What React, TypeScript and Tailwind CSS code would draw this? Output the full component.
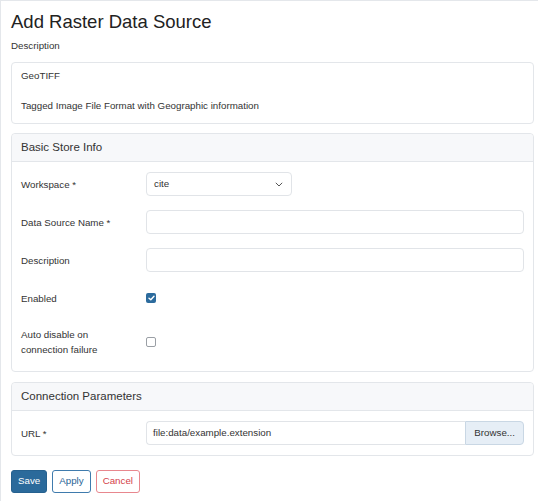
import React from "react";

function Panel({ title, className, children }: { title: string; className: string; children: React.ReactNode }) {
  return (
    <div className={`rounded-[4px] border border-[#e3e6ea] bg-white ${className}`}>
      <div className="flex h-[28px] items-center rounded-t-[4px] border-b border-[#e3e6ea] bg-[#f7f8fa] px-[9px] text-[11.5px] text-[#333]">
        {title}
      </div>
      {children}
    </div>
  );
}

function Row({ label, children, tall }: { label: React.ReactNode; children: React.ReactNode; tall?: boolean }) {
  return (
    <div className={`flex items-center ${tall ? "min-h-[36px]" : "h-[24px]"}`}>
      <div className="w-[125px] shrink-0 leading-[15px]">{label}</div>
      <div className="flex flex-1 items-center">{children}</div>
    </div>
  );
}

function TextInput() {
  return <div className="h-[24px] w-full rounded-[4px] border border-[#e1e4e8] bg-white" />;
}

function Checkbox({ checked }: { checked?: boolean }) {
  if (checked) {
    return (
      <div className="flex h-[10px] w-[10px] items-center justify-center rounded-[2px] bg-[#2c6b9d]">
        <svg width="7" height="6" viewBox="0 0 7 6" fill="none">
          <path d="M1 3.2 L2.8 4.8 L6 1.2" stroke="white" strokeWidth="1.4" strokeLinecap="round" strokeLinejoin="round" />
        </svg>
      </div>
    );
  }
  return <div className="h-[10px] w-[10px] rounded-[2px] border border-[#9a9fa5] bg-white" />;
}

export default function App() {
  return (
    <div className="min-h-[501px] border-l border-t border-[#e4e7eb] bg-white pl-[10px] pr-[4px] font-['Liberation_Sans',Arial,sans-serif] text-[9.75px] text-[#333]">
      <h1 className="pt-[10px] text-[18.5px] leading-[22px] text-[#222]">Add Raster Data Source</h1>
      <div className="mt-[6px] leading-[14px]">Description</div>

      <div className="mt-[9px] rounded-[4px] border border-[#e3e6ea] px-[9px] pb-[10px] pt-[6px] leading-[14px]">
        <p>GeoTIFF</p>
        <p className="mt-[16px]">Tagged Image File Format with Geographic information</p>
      </div>

      <Panel title="Basic Store Info" className="mt-[9px]">
        <div className="flex flex-col gap-[14px] px-[9px] pb-[11px] pt-[10px]">
          <Row label="Workspace *">
            <div className="flex h-[24px] w-[146px] items-center justify-between rounded-[4px] border border-[#e1e4e8] pl-[7px] pr-[8px]">
              <span>cite</span>
              <svg width="8" height="5" viewBox="0 0 8 5" fill="none">
                <path d="M0.8 0.8 L4 4 L7.2 0.8" stroke="#555" strokeWidth="1" />
              </svg>
            </div>
          </Row>
          <Row label="Data Source Name *">
            <TextInput />
          </Row>
          <Row label="Description">
            <TextInput />
          </Row>
          <Row label="Enabled">
            <Checkbox checked />
          </Row>
          <Row
            tall
            label={
              <>
                Auto disable on
                <br />
                connection failure
              </>
            }
          >
            <Checkbox />
          </Row>
        </div>
      </Panel>

      <Panel title="Connection Parameters" className="mt-[10px]">
        <div className="px-[9px] pb-[10px] pt-[10px]">
          <Row label="URL *">
            <div className="flex h-[24px] w-full">
              <div className="flex flex-1 items-center rounded-l-[4px] border border-r-0 border-[#e1e4e8] pl-[6px]">
                file:data/example.extension
              </div>
              <button className="rounded-r-[4px] border border-[#c9d7e4] bg-[#e6eef6] px-[8px] text-[9.75px] text-[#333]">
                Browse...
              </button>
            </div>
          </Row>
        </div>
      </Panel>

      <div className="mt-[14px] flex gap-[5px]">
        <button className="h-[23px] rounded-[3px] border border-[#26618f] bg-[#2b6a9b] px-[6px] text-[9.75px] text-white">
          Save
        </button>
        <button className="h-[23px] rounded-[3px] border border-[#3f7bad] bg-white px-[6px] text-[9.75px] text-[#2a6496]">
          Apply
        </button>
        <button className="h-[23px] rounded-[3px] border border-[#e8878e] bg-white px-[6px] text-[9.75px] text-[#d43f4a]">
          Cancel
        </button>
      </div>
    </div>
  );
}
